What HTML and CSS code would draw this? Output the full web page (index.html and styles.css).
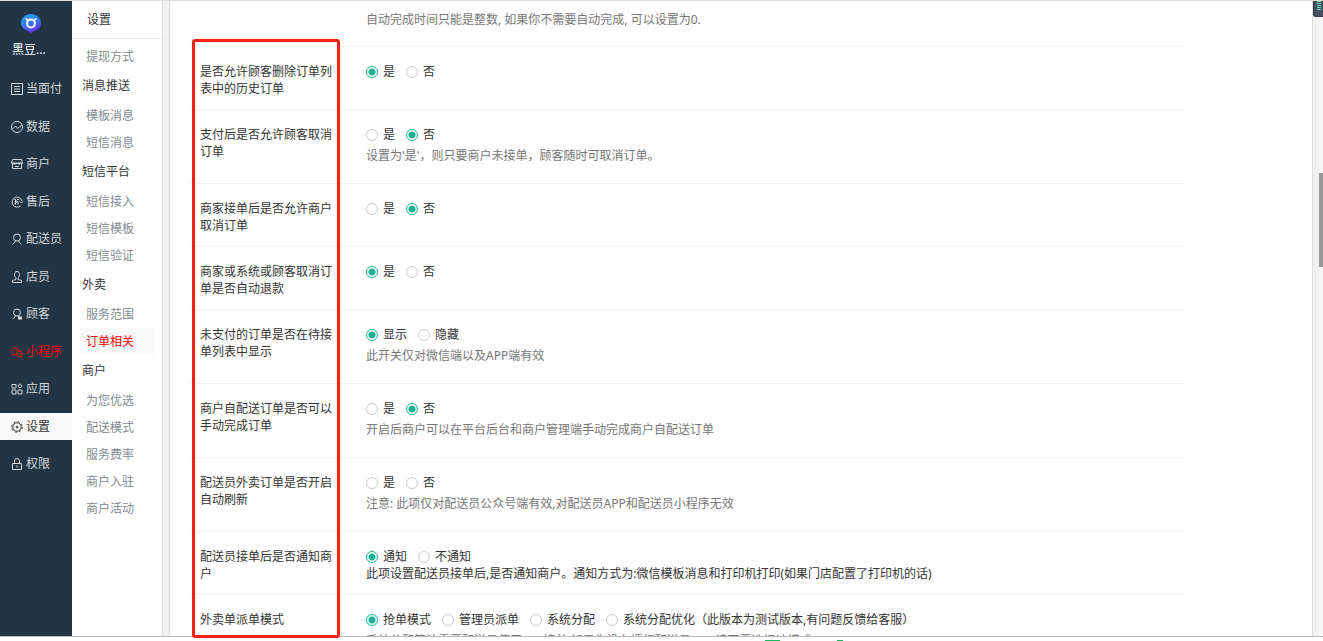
FILE: index.html
```html
<!DOCTYPE html>
<html lang="zh-CN">
<head>
<meta charset="utf-8">
<title>设置 - 订单相关</title>
<link rel="stylesheet" href="styles.css">
</head>
<body>
<div class="app">
  <nav class="rail" aria-label="主菜单">
    <a class="brand" href="#">
      <svg class="brand-logo" viewBox="0 0 20 20" aria-hidden="true">
        <defs><linearGradient id="pin" x1="0" y1="0" x2="0.4" y2="1"><stop offset="0" stop-color="#1aa3ff"/><stop offset="0.45" stop-color="#2f86f6"/><stop offset="1" stop-color="#6430f5"/></linearGradient></defs>
        <path d="M10 0C4.500 0 0 4 0 9c0 4 3 6.500 6 7.500 2 .8 3 1.800 4 3.500 1-1.700 2-2.700 4-3.500 3-1 6-3.500 6-7.500 0-5-4.500-9-10-9z" fill="url(#pin)"/>
        <circle cx="10" cy="9.500" r="3.900" fill="none" stroke="#fff" stroke-width="2"/>
        <path d="M5 4.200q.5 2.300 2.800 2.300M15 4.200q-.5 2.300-2.800 2.300" fill="none" stroke="#fff" stroke-width="1.400"/>
      </svg>
      <span class="brand-name">黑豆...</span>
    </a>
    <ul class="rail-list">
      <li><a class="rail-link" href="#"><svg class="icon" viewBox="0 0 12 12"><path d="M.5.5h11v11H.5zM3 3.500h6M3 6h6M3 8.500h6"/></svg>当面付</a></li>
      <li><a class="rail-link" href="#"><svg class="icon" viewBox="0 0 12 12"><circle cx="6" cy="6" r="5.500"/><path d="M1 8.500l3.500-3.500 2 2.500L11 4"/></svg>数据</a></li>
      <li><a class="rail-link" href="#"><svg class="icon" viewBox="0 0 12 12"><path d="M1.500 1.500h9l1 3.500H.5zM1.500 5.500v5h9v-5M.5 5.500h11M4 5v2M8 5v2M4 8.500h4"/></svg>商户</a></li>
      <li><a class="rail-link" href="#"><svg class="icon" viewBox="0 0 12 12"><path d="M9.500 9.800A5 5 0 1 1 11 5M9 5.500l1.500 1.500L12 5.500M3.500 3l3 3-3 1.500M4.500 3v5.500M6 3.500h2M7 5.500v3"/></svg>售后</a></li>
      <li><a class="rail-link" href="#"><svg class="icon" viewBox="0 0 12 12"><circle cx="6" cy="4.500" r="3.500"/><path d="M4.500 7.500L4 9l-2.500 2.500M7.500 7.500L8 9l2.500 2.500"/></svg>配送员</a></li>
      <li><a class="rail-link" href="#"><svg class="icon" viewBox="0 0 12 12"><path d="M6 .5C4 .5 3.500 2 3.500 3.500S4.200 6 5 7v1.500L1.500 9.500v2h9v-2L7 8.500V7c.8-1 1.500-2 1.500-3.500S8 .5 6 .5z"/></svg>店员</a></li>
      <li><a class="rail-link" href="#"><svg class="icon" viewBox="0 0 12 12"><circle cx="6" cy="4.500" r="3.500"/><path d="M4.500 7.500L4 9l-2.500 2M7.500 7.500L8 9"/><path class="solid" d="M7 8.500h4v3H7z"/></svg>顾客</a></li>
      <li><a class="rail-link rail-link-alert" href="#"><svg class="icon" viewBox="0 0 12 12"><path d="M6 8.500H3.500L2 9.500V7.800C-.5 6 .5 2 4 2c2.500 0 3.800 1.300 4 3"/><ellipse cx="8.500" cy="7.800" rx="3" ry="2.700"/><path d="M10.500 10v1.300L8.500 10.500M2.500 4.500h1M5 4.500h1M7 7.500h1M9.300 7.500h1"/></svg>小程序</a></li>
      <li><a class="rail-link" href="#"><svg class="icon" viewBox="0 0 12 12"><path d="M1 1.500h4v3.500H1zM1 7h4v4H1zM7 7h4v4H7zM9 .8L11.200 3 9 5.200 6.800 3z"/></svg>应用</a></li>
      <li><a class="rail-link rail-link-active" href="#" aria-current="page"><svg class="icon" viewBox="0 0 12 12"><circle cx="6" cy="6" r="4.200"/><circle cx="6" cy="6" r="5.300" stroke-dasharray="2 2.160"/><circle cx="6" cy="6" r="1"/></svg>设置</a></li>
      <li><a class="rail-link" href="#"><svg class="icon" viewBox="0 0 12 12"><path d="M1.500 5.500h9v6h-9zM3.500 5.500V3a2.500 2.500 0 0 1 5 0v2.500M6 7.500v2"/></svg>权限</a></li>
    </ul>
  </nav>

  <nav class="menu" aria-label="设置">
    <h1 class="menu-title">设置</h1>
    <div class="menu-body">
      <a class="menu-link" href="#">提现方式</a>
      <h2 class="menu-heading">消息推送</h2>
      <a class="menu-link" href="#">模板消息</a>
      <a class="menu-link" href="#">短信消息</a>
      <h2 class="menu-heading">短信平台</h2>
      <a class="menu-link" href="#">短信接入</a>
      <a class="menu-link" href="#">短信模板</a>
      <a class="menu-link" href="#">短信验证</a>
      <h2 class="menu-heading">外卖</h2>
      <a class="menu-link" href="#">服务范围</a>
      <a class="menu-link menu-link-active" href="#" aria-current="page">订单相关</a>
      <h2 class="menu-heading">商户</h2>
      <a class="menu-link" href="#">为您优选</a>
      <a class="menu-link" href="#">配送模式</a>
      <a class="menu-link" href="#">服务费率</a>
      <a class="menu-link" href="#">商户入驻</a>
      <a class="menu-link" href="#">商户活动</a>
    </div>
  </nav>

  <main class="main">
    <form class="form">
      <p class="lead">自动完成时间只能是整数, 如果你不需要自动完成, 可以设置为0.</p>

      <div class="row" role="radiogroup" aria-labelledby="l1">
        <div class="row-label" id="l1">是否允许顾客删除订单列表中的历史订单</div>
        <div class="row-field">
          <div class="options"><label class="option"><input type="radio" name="del" checked>是</label><label class="option"><input type="radio" name="del">否</label></div>
        </div>
      </div>

      <div class="row" role="radiogroup" aria-labelledby="l2">
        <div class="row-label" id="l2">支付后是否允许顾客取消订单</div>
        <div class="row-field">
          <div class="options"><label class="option"><input type="radio" name="cancel">是</label><label class="option"><input type="radio" name="cancel" checked>否</label></div>
          <p class="help">设置为'是'，则只要商户未接单，顾客随时可取消订单。</p>
        </div>
      </div>

      <div class="row" role="radiogroup" aria-labelledby="l3">
        <div class="row-label" id="l3">商家接单后是否允许商户取消订单</div>
        <div class="row-field">
          <div class="options"><label class="option"><input type="radio" name="shop">是</label><label class="option"><input type="radio" name="shop" checked>否</label></div>
        </div>
      </div>

      <div class="row" role="radiogroup" aria-labelledby="l4">
        <div class="row-label" id="l4">商家或系统或顾客取消订单是否自动退款</div>
        <div class="row-field">
          <div class="options"><label class="option"><input type="radio" name="refund" checked>是</label><label class="option"><input type="radio" name="refund">否</label></div>
        </div>
      </div>

      <div class="row" role="radiogroup" aria-labelledby="l5">
        <div class="row-label" id="l5">未支付的订单是否在待接单列表中显示</div>
        <div class="row-field">
          <div class="options"><label class="option"><input type="radio" name="unpaid" checked>显示</label><label class="option"><input type="radio" name="unpaid">隐藏</label></div>
          <p class="help">此开关仅对微信端以及APP端有效</p>
        </div>
      </div>

      <div class="row" role="radiogroup" aria-labelledby="l6">
        <div class="row-label" id="l6">商户自配送订单是否可以手动完成订单</div>
        <div class="row-field">
          <div class="options"><label class="option"><input type="radio" name="manual">是</label><label class="option"><input type="radio" name="manual" checked>否</label></div>
          <p class="help">开启后商户可以在平台后台和商户管理端手动完成商户自配送订单</p>
        </div>
      </div>

      <div class="row" role="radiogroup" aria-labelledby="l7">
        <div class="row-label" id="l7">配送员外卖订单是否开启自动刷新</div>
        <div class="row-field">
          <div class="options"><label class="option"><input type="radio" name="refresh">是</label><label class="option"><input type="radio" name="refresh">否</label></div>
          <p class="help">注意: 此项仅对配送员公众号端有效,对配送员APP和配送员小程序无效</p>
        </div>
      </div>

      <div class="row" role="radiogroup" aria-labelledby="l8">
        <div class="row-label" id="l8">配送员接单后是否通知商户</div>
        <div class="row-field">
          <div class="options"><label class="option"><input type="radio" name="notify" checked>通知</label><label class="option"><input type="radio" name="notify">不通知</label></div>
          <p class="note">此项设置配送员接单后,是否通知商户。通知方式为:微信模板消息和打印机打印(如果门店配置了打印机的话)</p>
        </div>
      </div>

      <div class="row" role="radiogroup" aria-labelledby="l9">
        <div class="row-label" id="l9">外卖单派单模式</div>
        <div class="row-field">
          <div class="options"><label class="option"><input type="radio" name="mode" checked>抢单模式</label><label class="option"><input type="radio" name="mode">管理员派单</label><label class="option"><input type="radio" name="mode">系统分配</label><label class="option"><input type="radio" name="mode">系统分配优化（此版本为测试版本,有问题反馈给客服）</label></div>
          <p class="help">系统分配算法需要配送员使用app接单,如果你没有授权配送员app,请不要选择该模式</p>
        </div>
      </div>
    </form>
  </main>

  <div class="scroll" aria-hidden="true"><div class="track"><div class="thumb"></div></div></div>
  <div class="monitor" aria-hidden="true"><i></i><i></i><i></i><i></i><i></i></div>
</div>
<footer class="dock" aria-hidden="true"><span class="dock-mark dock-mark-wide"></span><span class="dock-mark"></span></footer>
<div class="frame" aria-hidden="true"></div>
</body>
</html>
```
FILE: styles.css
```css
* { box-sizing: border-box; }

body {
  margin: 0;
  height: 100vh;
  display: flex;
  flex-direction: column;
  position: relative;
  overflow: hidden;
  background: #fff;
  color: #333;
  font-family: "Noto Sans", "Noto Sans CJK SC", sans-serif;
  font-size: 12px;
  line-height: 17px;
}

h1, h2, p, ul { margin: 0; padding: 0; font-size: 12px; font-weight: 400; }
ul { list-style: none; }
a { color: inherit; text-decoration: none; }

.app {
  flex: 1;
  min-height: 0;
  display: flex;
  position: relative;
  overflow: hidden;
  border-top: 1px solid #ddd;
}

/* Primary navigation */
.rail { flex: 0 0 72px; background: #213544; color: #d3d7da; }

.brand {
  display: block;
  height: 74px;
  padding: 13px 0 0 12px;
  color: #fff;
}
.brand-logo { display: block; width: 20px; height: 20px; margin-left: 9px; }
.brand-name { display: block; margin-top: 7px; }

.rail-list li { margin-bottom: 10px; }
.rail-list li:nth-child(odd) { margin-bottom: 11px; }

.rail-link {
  display: flex;
  align-items: center;
  gap: 3px;
  height: 27px;
  padding-left: 11px;
  white-space: nowrap;
}
.rail-link-alert { color: #f00; }
.rail-link-active { background: #f8f8f8; color: #333; }

.icon {
  flex: none;
  width: 12px;
  height: 12px;
  fill: none;
  stroke: currentColor;
  stroke-width: 1;
}
.icon .solid { fill: currentColor; stroke: none; }

/* Secondary navigation */
.menu { flex: 0 0 91px; border-right: 1px solid #ddd; }

.menu-title {
  height: 38px;
  padding-left: 15px;
  border-bottom: 1px solid #eee;
  line-height: 37px;
}
.menu-body { padding: 4px 7px 0 8px; }

.menu-link {
  display: block;
  padding-left: 6px;
  border-radius: 2px;
  color: #848a91;
  line-height: 27px;
}
.menu-link-active { background: #f8f8f8; color: #f00; }
.menu-heading { padding-left: 2px; line-height: 32px; }

/* Settings form */
.main {
  flex: 1;
  min-width: 0;
  margin-left: 6px;
  padding-left: 18px;
  border-left: 1px solid #ddd;
  border-right: 1px solid #ddd;
  box-shadow: -6px 0 0 #f1f1f1;
}
.form { max-width: 996px; }

.lead {
  padding: 10px 0 18px 178px;
  color: #777;
}

.row {
  display: flex;
  padding: 16px 0 12px;
  border-top: 1px solid #f2f2f2;
}
.row-label { flex: 0 0 178px; padding: 0 33px 0 12px; }
.row-field { flex: 1; min-width: 0; }

.options { display: flex; gap: 11px; }
.option { display: flex; align-items: center; gap: 5px; white-space: nowrap; }

.option input {
  appearance: none;
  flex: none;
  width: 12px;
  height: 12px;
  margin: 0;
  border: 1px solid #ccc;
  border-radius: 50%;
  background: #fff;
}
.option input:checked {
  border-color: #1ab394;
  background: radial-gradient(circle, #1ab394 3px, #fff 4px);
}

.help { padding: 4px 0 7px; color: #777; }

/* Page scroll indicator */
.scroll {
  flex: 0 0 10px;
  padding-left: 6px;
  background: #f0f0f0;
}
.track { height: 100%; padding-top: 172px; background: #f6f6f6; }
.thumb { height: 94px; background: #999; }

.monitor {
  position: absolute;
  top: -1px;
  right: 0;
  width: 10px;
  height: 17px;
  padding: 1px 2px 0 3px;
  border: solid #343846;
  border-width: 0 0 1px 1px;
  border-radius: 0 0 0 3px;
  background: #4a4f5f;
}
.monitor i { display: block; height: 1px; margin-bottom: 1px; background: #5de6b4; }

/* Strip below the page */
.dock {
  flex: 0 0 5px;
  display: flex;
  align-items: flex-end;
  gap: 57px;
  padding-left: 765px;
  border-top: 1px solid #bbb;
}
.dock-mark { width: 6px; height: 1px; background: #1bb65b; }
.dock-mark-wide { width: 15px; }

/* Highlight drawn over the label column */
.frame {
  position: absolute;
  top: 39px;
  bottom: 3px;
  left: 192px;
  width: 148px;
  border: 3px solid #ff1f14;
  border-radius: 3px;
}
```
